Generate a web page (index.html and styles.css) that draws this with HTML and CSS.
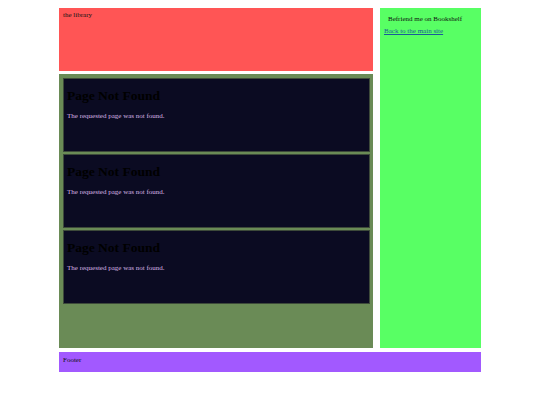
FILE: index.html
```html
<!DOCTYPE html>
<html>
<head>
<meta charset="utf-8">
<link rel="stylesheet" href="styles.css">
</head>
<body>
<div class="page">
  <header class="header">the library</header>
  <main class="main">
    <section class="card">
      <h1 class="card-title">Page Not Found</h1>
      <p class="card-text">The requested page was not found.</p>
    </section>
    <section class="card">
      <h1 class="card-title">Page Not Found</h1>
      <p class="card-text">The requested page was not found.</p>
    </section>
    <section class="card">
      <h1 class="card-title">Page Not Found</h1>
      <p class="card-text">The requested page was not found.</p>
    </section>
  </main>
  <aside class="sidebar">
    <p class="befriend">Befriend me on Bookshelf</p>
    <a class="back" href="#">Back to the main site</a>
  </aside>
  <footer class="footer">Footer</footer>
</div>
</body>
</html>
```

FILE: styles.css
```css
html, body {
  margin: 0;
  padding: 0;
  background: #ffffff;
}
body {
  padding: 8px 0;
  font-family: "Liberation Serif", "Times New Roman", serif;
  font-size: 7px;
  color: #111;
}
.page {
  width: 422px;
  margin: 0 auto;
  display: grid;
  grid-template-columns: 314px 101px;
  grid-template-rows: 63px 274px 21px;
  column-gap: 7px;
  row-gap: 3px;
}
.header {
  grid-column: 1;
  grid-row: 1;
  background: #ff5555;
  padding: 3px 4px;
  line-height: 8px;
}
.main {
  grid-column: 1;
  grid-row: 2;
  background: #6a8b56;
  padding: 4px 3px 0 4px;
  display: flex;
  flex-direction: column;
  gap: 2px;
}
.card {
  height: 72px;
  background: #0b0b22;
  border: 1px solid #3d4a3a;
  padding: 0 3px;
}
.card-title {
  margin: 9px 0 0;
  font-size: 13.5px;
  line-height: 15px;
  font-weight: bold;
  color: #000;
}
.card-text {
  margin: 9px 0 0;
  color: #d8b4e4;
  line-height: 8px;
}
.sidebar {
  grid-column: 2;
  grid-row: 1 / span 2;
  background: #58ff64;
  padding: 7px 4px;
}
.befriend {
  margin: 0 0 4px 4px;
  line-height: 8px;
}
.back {
  color: #1a5a9a;
  line-height: 8px;
}
.footer {
  grid-column: 1 / span 2;
  grid-row: 3;
  margin-top: 1px;
  background: #a259ff;
  padding: 4px 4px;
  line-height: 8px;
}
```
